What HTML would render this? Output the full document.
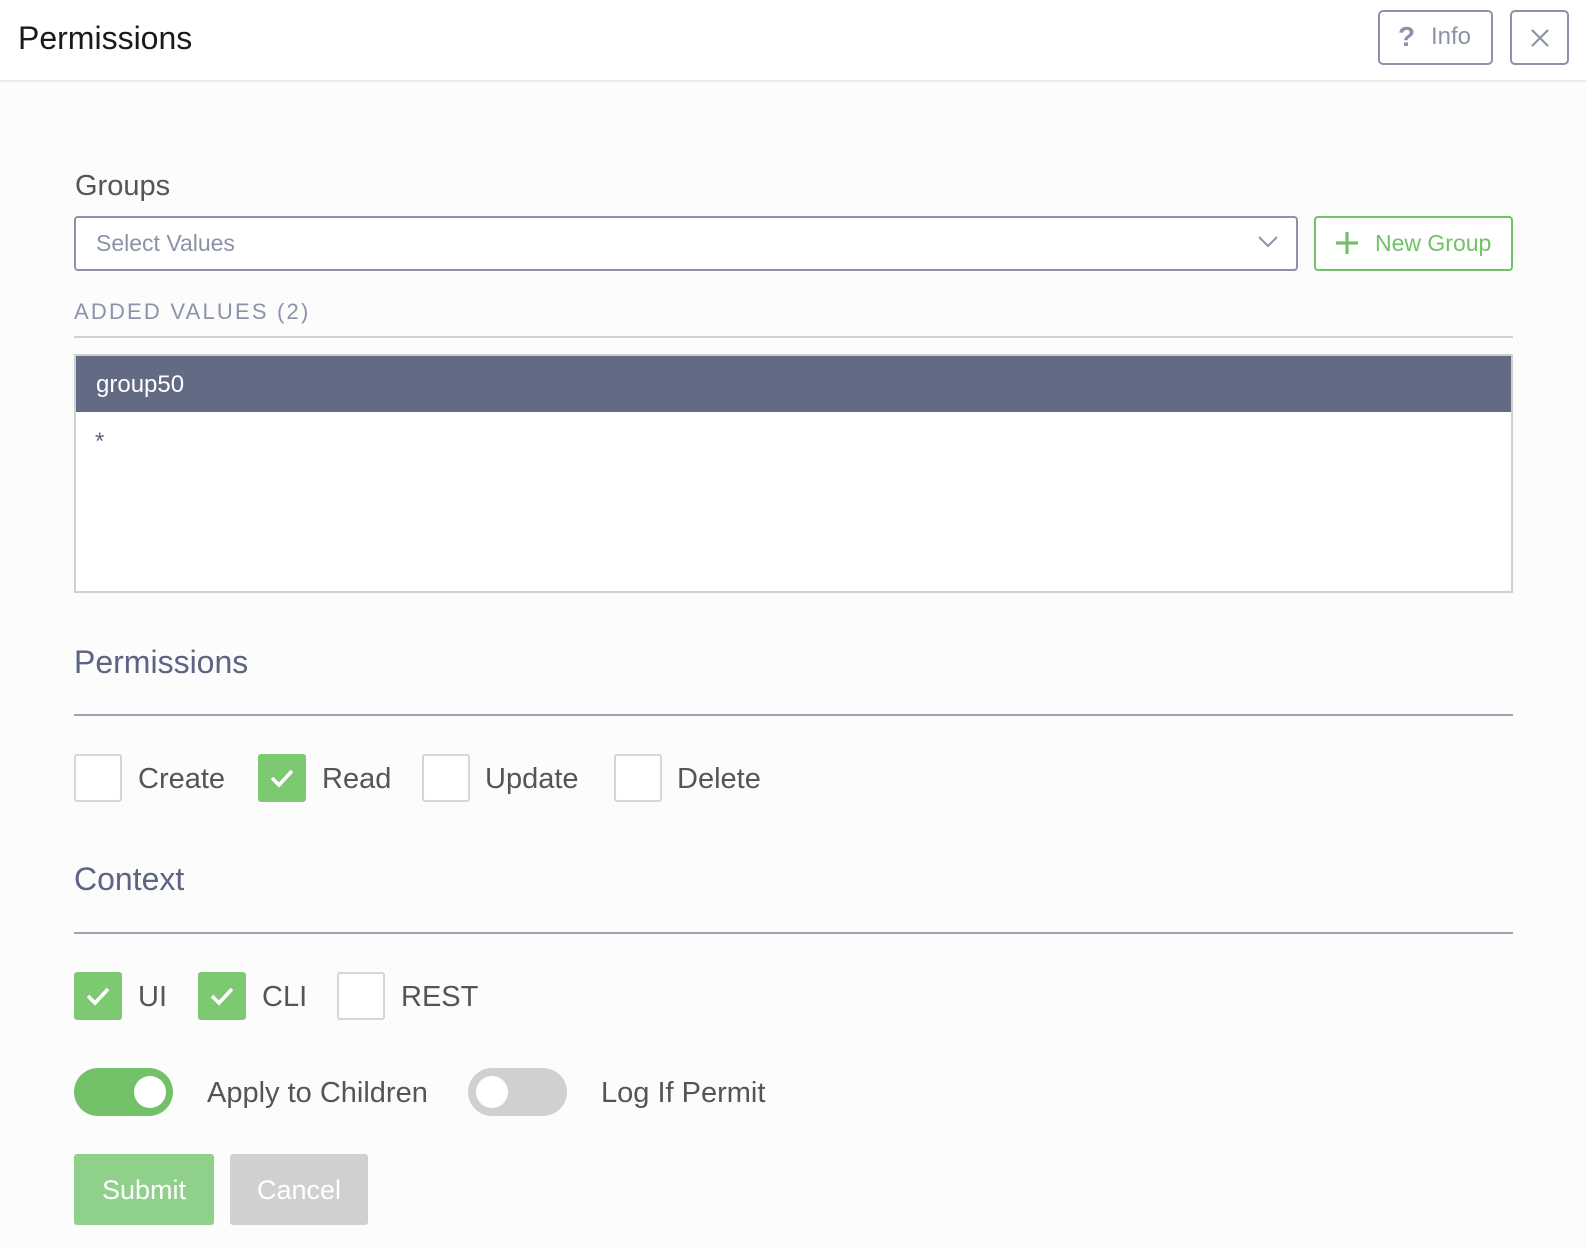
<!DOCTYPE html>
<html><head><meta charset="utf-8"><style>
*{margin:0;padding:0;box-sizing:border-box}
body{width:1586px;height:1248px;background:#fcfcfc;font-family:"Liberation Sans",Arial,sans-serif;position:relative;overflow:hidden}
.a{position:absolute}
.t{position:absolute;white-space:nowrap;line-height:40px}
.cb{position:absolute;width:48px;height:48px;border:2px solid #d6d6d6;border-radius:3px;background:#fff}
.cb.on{background:#7cc972;border:none}
.cb.on svg{position:absolute;left:12px;top:14px}
.lbl{font-size:29px;color:#555}
.h{font-size:32px;color:#5c6482}
</style></head><body>
<div class="a" style="left:0;top:0;width:1586px;height:82px;background:#fff;border-bottom:2px solid #ebebeb"></div>
<div class="t" style="left:18px;top:18px;font-size:32px;color:#1a1a1a">Permissions</div>
<div class="a" style="left:1378px;top:10px;width:115px;height:55px;border:2px solid #8c93a8;border-radius:5px"></div>
<div class="t" style="left:1398px;top:17px;font-size:28px;color:#8c93a8;font-weight:bold">?</div>
<div class="t" style="left:1431px;top:17px;font-size:24px;color:#8c93a8">Info</div>
<div class="a" style="left:1510px;top:10px;width:59px;height:55px;border:2px solid #8c93a8;border-radius:5px"></div>
<svg class="a" style="left:1530px;top:28px" width="20" height="20"><path d="M2 2L18 18M18 2L2 18" stroke="#8c93a8" stroke-width="2.2"/></svg>

<div class="t" style="left:75px;top:166px;font-size:29px;color:#555">Groups</div>
<div class="a" style="left:74px;top:216px;width:1224px;height:55px;border:2px solid #8c93a8;border-radius:4px;background:#fff"></div>
<div class="t" style="left:96px;top:223px;font-size:23px;color:#8c93a8">Select Values</div>
<svg class="a" style="left:1258px;top:236px" width="20" height="12"><path d="M1 1L10 10L19 1" stroke="#8c93a8" stroke-width="2" fill="none"/></svg>
<div class="a" style="left:1314px;top:216px;width:199px;height:55px;border:2px solid #72c168;border-radius:4px;background:#fff"></div>
<svg class="a" style="left:1335px;top:231px" width="24" height="24"><path d="M12 1V23M1 12H23" stroke="#72c168" stroke-width="3.2"/></svg>
<div class="t" style="left:1375px;top:223px;font-size:23px;color:#72c168">New Group</div>

<div class="t" style="left:74px;top:292px;font-size:22px;color:#8c93a8;letter-spacing:2.2px">ADDED VALUES (2)</div>
<div class="a" style="left:74px;top:336px;width:1439px;height:2px;background:#cad4d7"></div>
<div class="a" style="left:74px;top:354px;width:1439px;height:239px;border:2px solid #d0d0d0;background:#fff"></div>
<div class="a" style="left:76px;top:356px;width:1435px;height:56px;background:#636a83"></div>
<div class="t" style="left:96px;top:365px;font-size:24px;color:#fff">group50</div>
<div class="t" style="left:95px;top:422px;font-size:24px;color:#5c6482">*</div>

<div class="t h" style="left:74px;top:642px">Permissions</div>
<div class="a" style="left:74px;top:714px;width:1439px;height:2px;background:#9ca2b5"></div>
<div class="cb" style="left:74px;top:754px"></div>
<div class="t lbl" style="left:138px;top:759px">Create</div>
<div class="cb on" style="left:258px;top:754px"><svg width="24" height="20"><path d="M2 10L9 17L22 3" stroke="#fff" stroke-width="3.6" fill="none"/></svg></div>
<div class="t lbl" style="left:322px;top:759px">Read</div>
<div class="cb" style="left:422px;top:754px"></div>
<div class="t lbl" style="left:485px;top:759px">Update</div>
<div class="cb" style="left:614px;top:754px"></div>
<div class="t lbl" style="left:677px;top:759px">Delete</div>

<div class="t h" style="left:74px;top:859px">Context</div>
<div class="a" style="left:74px;top:932px;width:1439px;height:2px;background:#9ca2b5"></div>
<div class="cb on" style="left:74px;top:972px"><svg width="24" height="20"><path d="M2 10L9 17L22 3" stroke="#fff" stroke-width="3.6" fill="none"/></svg></div>
<div class="t lbl" style="left:138px;top:977px">UI</div>
<div class="cb on" style="left:198px;top:972px"><svg width="24" height="20"><path d="M2 10L9 17L22 3" stroke="#fff" stroke-width="3.6" fill="none"/></svg></div>
<div class="t lbl" style="left:262px;top:977px">CLI</div>
<div class="cb" style="left:337px;top:972px"></div>
<div class="t lbl" style="left:401px;top:977px">REST</div>

<div class="a" style="left:74px;top:1068px;width:99px;height:48px;border-radius:24px;background:#72c168"></div>
<div class="a" style="left:134px;top:1076px;width:32px;height:32px;border-radius:50%;background:#fff"></div>
<div class="t lbl" style="left:207px;top:1073px">Apply to Children</div>
<div class="a" style="left:468px;top:1068px;width:99px;height:48px;border-radius:24px;background:#d0d0d0"></div>
<div class="a" style="left:476px;top:1076px;width:32px;height:32px;border-radius:50%;background:#fff"></div>
<div class="t lbl" style="left:601px;top:1073px">Log If Permit</div>

<div class="a" style="left:74px;top:1154px;width:140px;height:71px;border-radius:3px;background:#8fd18a"></div>
<div class="t" style="left:74px;top:1170px;width:140px;text-align:center;font-size:27px;color:#fff">Submit</div>
<div class="a" style="left:230px;top:1154px;width:138px;height:71px;border-radius:3px;background:#d0d0d0"></div>
<div class="t" style="left:230px;top:1170px;width:138px;text-align:center;font-size:27px;color:#fff">Cancel</div>
</body></html>
